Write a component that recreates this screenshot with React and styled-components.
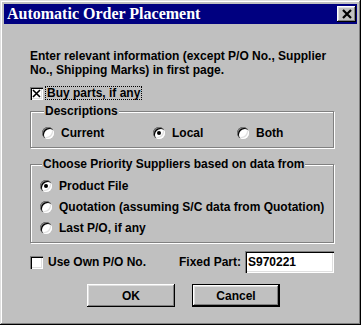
import React from "react";
import styled, { createGlobalStyle } from "styled-components";

const GlobalStyle = createGlobalStyle`
  html, body {
    margin: 0;
    padding: 0;
    background: #c0c0c0;
  }
  body {
    font-family: "Liberation Sans", Arial, sans-serif;
    font-size: 12px;
    font-weight: 700;
    color: #000;
  }
`;

const raised = `
  box-shadow: inset -1px -1px 0 #000, inset 1px 1px 0 #fff,
    inset -2px -2px 0 #808080, inset 2px 2px 0 #dfdfdf;
`;

const sunken = `
  box-shadow: inset 1px 1px 0 #808080, inset 2px 2px 0 #000,
    inset -1px -1px 0 #fff, inset -2px -2px 0 #dfdfdf;
`;

const Window = styled.div`
  width: 361px;
  height: 325px;
  box-sizing: border-box;
  padding: 4px;
  background: #c0c0c0;
  display: flex;
  flex-direction: column;
  box-shadow: inset -1px -1px 0 #000, inset 1px 1px 0 #dfdfdf,
    inset -2px -2px 0 #808080, inset 2px 2px 0 #fff;
`;

const TitleBar = styled.div`
  height: 20px;
  background: #000080;
  display: flex;
  align-items: center;
  justify-content: space-between;
  padding: 0 1px 0 3px;
`;

const Title = styled.span`
  font-family: "Liberation Serif", "Times New Roman", serif;
  font-size: 16px;
  font-weight: 700;
  color: #fff;
  line-height: 20px;
`;

const CloseButton = styled.button`
  width: 19px;
  height: 16px;
  padding: 0;
  border: none;
  background: #c0c0c0;
  display: flex;
  align-items: center;
  justify-content: center;
  ${raised}
`;

const Body = styled.div`
  flex: 1;
  display: flex;
  flex-direction: column;
  padding: 25px 23px 0 26px;
`;

const Intro = styled.p`
  margin: 0;
  line-height: 14px;
`;

const CheckRow = styled.div`
  display: flex;
  align-items: center;
  gap: ${(p) => p.$gap}px;
  margin-top: ${(p) => p.$top}px;
`;

const CheckBox = styled.span`
  width: 13px;
  height: 13px;
  flex: none;
  background: #fff;
  display: flex;
  align-items: center;
  justify-content: center;
  ${sunken}
`;

const FocusLabel = styled.span`
  border: 1px dotted #000;
  padding: 0 1px;
  line-height: 12px;
`;

const Group = styled.fieldset`
  margin: ${(p) => p.$top}px 0 0;
  padding: 7px 0 6px ${(p) => p.$left}px;
  border: 1px solid #808080;
  box-shadow: inset 1px 1px 0 #fff, 1px 1px 0 #fff;
  min-width: 0;
`;

const Legend = styled.legend`
  margin-left: 2px;
  padding: 0 1px;
  line-height: 14px;
  background: #c0c0c0;
`;

const RadioRow = styled.div`
  display: grid;
  grid-template-columns: 111px 84px auto;
`;

const RadioList = styled.div`
  display: flex;
  flex-direction: column;
  gap: 5px;
`;

const Option = styled.label`
  display: flex;
  align-items: center;
  gap: 7px;
  height: 16px;
`;

const Radio = styled.span`
  position: relative;
  width: 12px;
  height: 12px;
  flex: none;
  border-radius: 50%;
  background: #fff;
  ${sunken}
  &::after {
    content: "";
    display: ${(p) => (p.$on ? "block" : "none")};
    position: absolute;
    left: 4px;
    top: 4px;
    width: 4px;
    height: 4px;
    border-radius: 50%;
    background: #000;
  }
`;

const BottomRow = styled.div`
  display: flex;
  align-items: center;
  margin-top: 8px;
  height: 22px;
`;

const Field = styled.div`
  margin-left: auto;
  display: flex;
  align-items: center;
  gap: 4px;
`;

const TextInput = styled.input`
  width: 89px;
  height: 22px;
  box-sizing: border-box;
  border: none;
  padding: 0 3px;
  background: #fff;
  font: 700 12px "Liberation Sans", Arial, sans-serif;
  color: #000;
  outline: none;
  ${sunken}
`;

const Buttons = styled.div`
  display: flex;
  justify-content: center;
  gap: 17px;
  margin-top: 11px;
  padding-left: 3px;
`;

const Button = styled.button`
  width: 88px;
  height: 23px;
  box-sizing: border-box;
  background: #c0c0c0;
  font: 700 12px "Liberation Sans", Arial, sans-serif;
  color: #000;
  padding: 0;
  border: ${(p) => (p.$default ? "1px solid #000" : "none")};
  ${raised}
`;

const XMark = ({ size = 9, w = 2 }) => (
  <svg width={size} height={size} viewBox={`0 0 ${size} ${size}`}>
    <path
      d={`M1 1 L${size - 1} ${size - 1} M${size - 1} 1 L1 ${size - 1}`}
      stroke="#000"
      strokeWidth={w}
      fill="none"
    />
  </svg>
);

const descriptions = [
  { label: "Current", on: false },
  { label: "Local", on: true },
  { label: "Both", on: false },
];

const sources = [
  { label: "Product File", on: true },
  { label: "Quotation (assuming S/C data from Quotation)", on: false },
  { label: "Last P/O, if any", on: false },
];

export default function App() {
  return (
    <>
      <GlobalStyle />
      <Window>
        <TitleBar>
          <Title>Automatic Order Placement</Title>
          <CloseButton>
            <XMark size={10} w={2.2} />
          </CloseButton>
        </TitleBar>
        <Body>
          <Intro>
            Enter relevant information (except P/O No., Supplier No., Shipping
            Marks) in first page.
          </Intro>
          <CheckRow $gap={2} $top={9}>
            <CheckBox>
              <XMark size={9} w={1.6} />
            </CheckBox>
            <FocusLabel>Buy parts, if any</FocusLabel>
          </CheckRow>

          <Group $top={4} $left={11}>
            <Legend>Descriptions</Legend>
            <RadioRow>
              {descriptions.map((d) => (
                <Option key={d.label}>
                  <Radio $on={d.on} />
                  {d.label}
                </Option>
              ))}
            </RadioRow>
          </Group>

          <Group $top={9} $left={9}>
            <Legend>Choose Priority Suppliers based on data from</Legend>
            <RadioList>
              {sources.map((s) => (
                <Option key={s.label}>
                  <Radio $on={s.on} />
                  {s.label}
                </Option>
              ))}
            </RadioList>
          </Group>

          <BottomRow>
            <CheckRow $gap={5} $top={0}>
              <CheckBox />
              <span>Use Own P/O No.</span>
            </CheckRow>
            <Field>
              <span>Fixed Part:</span>
              <TextInput defaultValue="S970221" />
            </Field>
          </BottomRow>

          <Buttons>
            <Button>OK</Button>
            <Button $default>Cancel</Button>
          </Buttons>
        </Body>
      </Window>
    </>
  );
}
